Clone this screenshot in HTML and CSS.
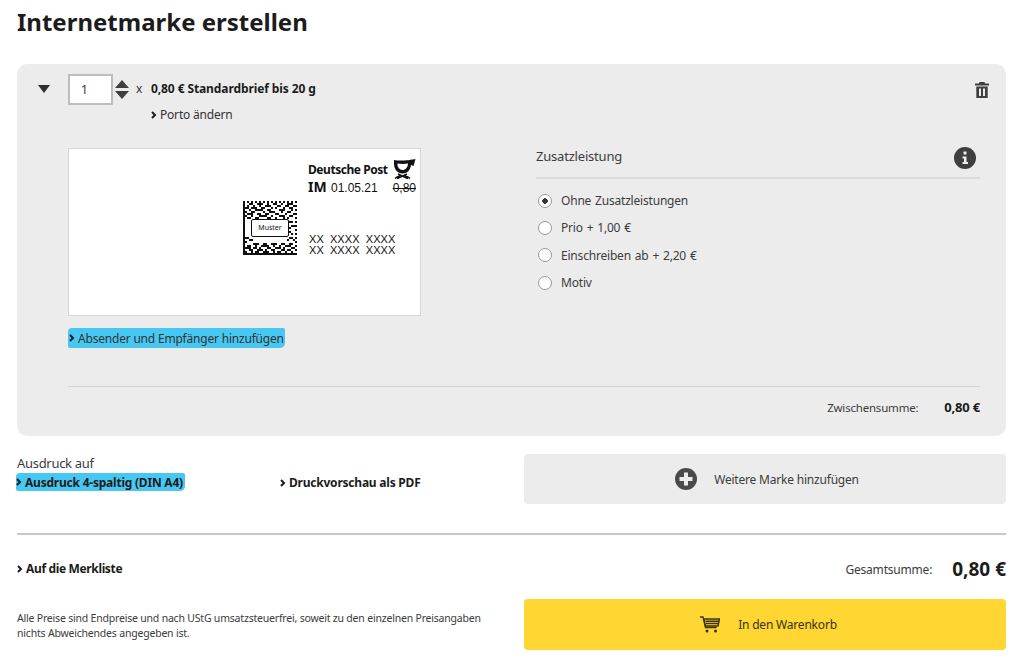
FILE: index.html
```html
<!DOCTYPE html>
<html lang="de">
<head>
<meta charset="utf-8">
<title>Internetmarke erstellen</title>
<link rel="stylesheet" href="styles.css">
</head>
<body>
<main class="page">
  <h1 class="title">Internetmarke erstellen</h1>

  <section class="panel">
    <div class="item-head">
      <svg class="caret" width="12" height="8" viewBox="0 0 12 8"><path d="M0 0h12L6 8z"/></svg>
      <input class="qty" type="text" value="1" aria-label="Anzahl">
      <svg class="spin" width="14" height="19" viewBox="0 0 14 19"><path d="M7 0l7 8H0zM0 11h14l-7 8z"/></svg>
      <span class="times">x</span>
      <div class="product">
        <strong class="product-name">0,80 € Standardbrief bis 20 g</strong>
        <a class="link porto"><svg class="chev" width="6" height="8" viewBox="0 0 6 8"><path d="M1 1l3 3-3 3"/></svg>Porto ändern</a>
      </div>
      <svg class="trash" width="14" height="16" viewBox="0 0 14 16"><path d="M4.500 0h5l.6 1.500H14v2H0v-2h3.900zM1.300 4.500h11.400V16H1.300zM4 6.500V14h2V6.500zM8 6.500V14h2V6.500z" fill-rule="evenodd"/></svg>
    </div>

    <div class="item-body">
      <div class="stamp-col">
        <div class="stamp">
          <div class="stamp-head">
            <div class="stamp-brand">
              <span>Deutsche Post</span>
              <svg class="horn" width="24" height="20" viewBox="0 0 24 20"><path fill-rule="evenodd" fill="#111" d="M2 1C4 1.500 6 1.500 8 1.500C12 1.500 16 1.500 23.500 0L21.500 7L19 6C18.500 11 15 14.500 10.500 14.500C5.500 14.500 2 10 2 5zM5.500 4.500C5 8 7.500 11 10.500 11C13.500 11 15.800 8.500 16 4.500C12 5 9 5 5.500 4.500z"/><path d="M6 15L16 19.700M15 15L5 19.700M3 19.500C4 18.500 5.500 17.500 8 17M18 19.500C17 18.500 15.500 17.500 13 17" fill="none" stroke="#111" stroke-width="1.500"/></svg>
            </div>
            <div class="stamp-line">
              <b class="stamp-im">IM</b>
              <span class="stamp-date">01.05.21</span>
              <span class="stamp-price">0,80</span>
            </div>
          </div>
          <div class="matrix">
            <svg width="54" height="54" viewBox="0 0 27 27" shape-rendering="crispEdges"><path fill="none" stroke="#111" stroke-width="1" d="M.5 0v27M0 26.500h27M2 .5h1M4 .5h1M6 .5h1M8 .5h1M10 .5h1M12 .5h1M14 .5h1M16 .5h1M18 .5h1M20 .5h1M22 .5h1M24 .5h1M26 .5h1M26.500 2v1M26.500 4v1M26.500 6v1M26.500 8v1M26.500 10v1M26.500 12v1M26.500 14v1M26.500 16v1M26.500 18v1M26.500 20v1M26.500 22v1M26.500 24v1M3 1.500h2M7 1.500h3M12 1.500h1M15 1.500h2M19 1.500h1M22 1.500h3M2 2.500h1M5 2.500h1M8 2.500h1M11 2.500h3M17 2.500h2M21 2.500h2M25 2.500h1M1 3.500h2M4 3.500h3M9 3.500h2M14 3.500h1M16 3.500h1M20 3.500h1M23 3.500h2M3 4.500h1M6 4.500h4M12 4.500h2M18 4.500h3M24 4.500h1M1 5.500h1M4 5.500h2M10 5.500h1M13 5.500h3M19 5.500h1M22 5.500h2M2 6.500h3M7 6.500h2M11 6.500h2M16 6.500h2M21 6.500h1M25 6.500h1M1 7.500h1M4 7.500h1M8 7.500h4M14 7.500h1M18 7.500h3M23 7.500h2M2 8.500h2M6 8.500h2M12 8.500h2M16 8.500h1M20 8.500h1M22 8.500h1M1 18.500h2M3 19.500h2M1 20.500h1M5 21.500h3M10 21.500h2M14 21.500h3M19 21.500h2M23 21.500h2M2 22.500h2M6 22.500h1M9 22.500h4M15 22.500h1M18 22.500h1M21 22.500h3M1 23.500h3M5 23.500h2M8 23.500h1M12 23.500h2M16 23.500h3M20 23.500h1M24 23.500h2M3 24.500h2M7 24.500h3M11 24.500h1M14 24.500h2M19 24.500h2M22 24.500h2M1 25.500h1M4 25.500h1M6 25.500h2M10 25.500h3M15 25.500h1M17 25.500h2M21 25.500h1M24 25.500h1M23 10.500h2M22 11.500h1M24 12.500h2M23 13.500h1M22 15.500h2M24 16.500h1M23 18.500h2M22 19.500h1M25 19.500h1"/></svg>
            <span class="muster">Muster</span>
          </div>
          <div class="stamp-code">XX&nbsp; XXXX&nbsp; XXXX<br>XX&nbsp; XXXX&nbsp; XXXX</div>
        </div>
        <a class="link sender"><mark class="marker"><svg class="chev" width="6" height="8" viewBox="0 0 6 8"><path d="M1 1l3 3-3 3"/></svg>Absender und Empfänger hinzufügen</mark></a>
      </div>

      <div class="extras">
        <div class="extras-head">
          <span class="extras-title">Zusatzleistung</span>
          <svg class="info" width="22" height="22" viewBox="0 0 22 22"><circle cx="11" cy="11" r="11" fill="#3f3f3f"/><path d="M9.500 4.500h3v3h-3zM8.500 9.500h4V15h1.500v2H8.500v-2H10v-3.500H8.500z" fill="#ececec"/></svg>
        </div>
        <ul class="options">
          <li class="option"><span class="radio radio-on"></span>Ohne Zusatzleistungen</li>
          <li class="option"><span class="radio"></span>Prio + 1,00 €</li>
          <li class="option"><span class="radio"></span>Einschreiben ab + 2,20 €</li>
          <li class="option"><span class="radio"></span>Motiv</li>
        </ul>
      </div>
    </div>

    <div class="subtotal">
      <span class="subtotal-label">Zwischensumme:</span>
      <strong class="subtotal-value">0,80 €</strong>
    </div>
  </section>

  <section class="print-row">
    <div class="print-col">
      <div class="print-label">Ausdruck auf</div>
      <a class="link bold"><mark class="marker marker-bold"><svg class="chev" width="6" height="8" viewBox="0 0 6 8"><path d="M1 1l3 3-3 3"/></svg>Ausdruck 4-spaltig (DIN A4)</mark></a>
    </div>
    <a class="link bold preview"><svg class="chev" width="6" height="8" viewBox="0 0 6 8"><path d="M1 1l3 3-3 3"/></svg>Druckvorschau als PDF</a>
    <button class="btn btn-grey" type="button">
      <svg width="22" height="22" viewBox="0 0 22 22"><circle cx="11" cy="11" r="11" fill="#4a4a4a"/><path d="M9 4.500h4V9h4.500v4H13v4.500H9V13H4.500V9H9z" fill="#ececec"/></svg>
      <span>Weitere Marke hinzufügen</span>
    </button>
  </section>

  <section class="total-row">
    <a class="link bold merk"><svg class="chev" width="6" height="8" viewBox="0 0 6 8"><path d="M1 1l3 3-3 3"/></svg>Auf die Merkliste</a>
    <div class="total">
      <span class="total-label">Gesamtsumme:</span>
      <strong class="total-value">0,80 €</strong>
    </div>
  </section>

  <section class="checkout-row">
    <p class="legal">Alle Preise sind Endpreise und nach UStG umsatzsteuerfrei, soweit zu den einzelnen Preisangaben nichts Abweichendes angegeben ist.</p>
    <button class="btn btn-yellow" type="button">
      <svg width="20" height="17" viewBox="0 0 20 17"><path d="M0 1h3l2.500 10.500h11" fill="none" stroke="#3a3312" stroke-width="1.300"/><path d="M3.800 3h15.700l-1.500 7H5.500z M5.500 5.200h13M6 7.500h12" fill="none" stroke="#3a3312" stroke-width="1.400"/><circle cx="7" cy="15" r="1.500" fill="#3a3312"/><circle cx="15.500" cy="15" r="1.500" fill="#3a3312"/></svg>
      <span>In den Warenkorb</span>
    </button>
  </section>
</main>
</body>
</html>
```
FILE: styles.css
```css
* { box-sizing: border-box; }
html, body { margin: 0; padding: 0; background: #fff; }
body {
  font-family: "Noto Sans", "Liberation Sans", sans-serif;
  font-size: 12px;
  letter-spacing: -.2px;
  color: #3c3c3c;
  width: 1024px;
  height: 664px;
  overflow: hidden;
}
.page { padding: 0 18px 0 17px; }
.title {
  margin: 0;
  height: 64px;
  padding-top: 5px;
  font-size: 24px;
  line-height: 34px;
  font-weight: 700;
  letter-spacing: 0;
  color: #1c1c1c;
}
.panel {
  height: 372px;
  background: #ececec;
  border-radius: 10px;
  padding: 10px 26px 0 21px;
}
.item-head { display: flex; align-items: flex-start; }
.caret { margin-top: 11px; margin-right: 18px; fill: #2f2f2f; flex: none; }
.qty {
  width: 45px;
  height: 31px;
  border: 2px solid #bdbdbd;
  background: #fff;
  padding: 0 0 0 11px;
  font: 12px "Noto Sans", sans-serif;
  color: #333;
  flex: none;
}
.spin { margin: 6px 0 0 2px; fill: #3f3f3f; flex: none; }
.times { margin: 6px 0 0 7px; width: 15px; color: #333; }
.product { flex: 1; display: flex; flex-direction: column; }
.product-name { margin-top: 6px; line-height: 17px; color: #1c1c1c; letter-spacing: -.1px; }
.porto { margin-top: 9px; line-height: 17px; }
.trash { margin: 8px -9px 0 0; fill: #3f3f3f; flex: none; }
.link { color: #333; text-decoration: none; display: block; white-space: nowrap; }
.bold { font-weight: 700; color: #1c1c1c; letter-spacing: -.22px; }
.merk { letter-spacing: -.35px; }
.chev { fill: none; stroke: #1c1c1c; stroke-width: 2; margin-right: 3px; vertical-align: 0; }
.item-body {
  display: flex;
  margin: 25px 0 0 30px;
  height: 239px;
  border-bottom: 1px solid #d4d4d4;
}
.stamp-col { width: 468px; flex: none; }
.stamp {
  width: 353px;
  height: 168px;
  background: #fff;
  border: 1px solid #d6d6d6;
  display: grid;
  grid-template-columns: 174px 65px 1fr;
  grid-template-rows: 52px 1fr;
  color: #111;
}
.stamp-head { grid-column: 3; grid-row: 1; padding-top: 9px; width: 108px; }
.stamp-brand { display: flex; justify-content: space-between; align-items: flex-end; height: 21px; font-size: 12px; font-weight: 700; letter-spacing: -.45px; }
.stamp-brand span { line-height: 18px; }
.stamp-line { display: flex; align-items: baseline; font-size: 12px; line-height: 15px; letter-spacing: 0; }
.stamp-im { font-size: 14px; width: 23px; }
.stamp-date { flex: 1; font-family: "Liberation Sans", sans-serif; }
.stamp-price { font-family: "Liberation Sans", sans-serif; text-decoration: line-through; }
.matrix { grid-column: 2; grid-row: 2; position: relative; width: 54px; height: 54px; }
.matrix svg { display: block; }
.muster {
  position: absolute;
  left: 8px;
  top: 18px;
  width: 38px;
  height: 18px;
  background: #fff;
  border: 1px solid #111;
  border-radius: 2px;
  font-size: 7px;
  letter-spacing: 0;
  line-height: 16px;
  text-align: center;
}
.stamp-code {
  grid-column: 3;
  grid-row: 2;
  padding: 33px 0 0 1px;
  font-size: 11px;
  line-height: 11px;
  font-family: "Liberation Sans", sans-serif;
  letter-spacing: .05px;
  white-space: nowrap;
}
.sender { margin-top: 13px; }
.marker { background: #46c8f2; color: inherit; border-radius: 4px 2px 5px 2px; padding: 1.500px 1px; }
.marker-bold { padding: .5px 2px 1px 0; margin-left: -1px; }
.extras { width: 444px; flex: none; margin-top: -1px; }
.extras-head {
  display: flex;
  justify-content: space-between;
  align-items: flex-start;
  height: 32px;
  border-bottom: 2px solid #d9d9d9;
}
.extras-title { font-size: 13px; line-height: 18px; }
.info { margin-right: 4px; }
.options { list-style: none; margin: 8px 0 0; padding: 0; }
.option { display: flex; align-items: center; height: 27.300px; padding-left: 2px; word-spacing: 1px; }
.radio {
  width: 14px;
  height: 14px;
  border: 1px solid #999;
  border-radius: 50%;
  background: #fff;
  margin-right: 9px;
  flex: none;
}
.radio-on { background: radial-gradient(circle, #333 0 2.500px, #fff 3px); }
.subtotal {
  display: flex;
  justify-content: flex-end;
  align-items: center;
  height: 40px;
}
.subtotal-label { font-size: 11.500px; }
.subtotal-value { margin-left: 26px; font-size: 13px; color: #1c1c1c; }
.print-row { display: flex; margin-top: 18px; height: 50px; }
.print-col { width: 263px; flex: none; }
.print-label { font-size: 13px; letter-spacing: -.3px; line-height: 17px; margin-top: 1px; }
.print-col .link { margin-top: 1px; }
.preview { width: 244px; flex: none; margin-top: 20px; }
.btn {
  width: 482px;
  height: 50px;
  border: 0;
  border-radius: 4px;
  display: flex;
  justify-content: center;
  align-items: center;
  font: 12px "Noto Sans", sans-serif;
  letter-spacing: -.2px;
  color: #3c3c3c;
  flex: none;
}
.btn-grey { background: #ececec; gap: 17px; padding-left: 10px; }
.btn-yellow { background: #ffd632; height: 51px; color: #3a3312; gap: 18px; padding-left: 13px; }
.total-row {
  display: flex;
  justify-content: space-between;
  align-items: center;
  margin-top: 29px;
  height: 66px;
  padding-top: 3px;
  border-top: 2px solid #c8c8c8;
}
.total { display: flex; align-items: center; }
.total-label { margin-top: 2px; }
.total-value { margin-left: 20px; font-size: 19px; color: #1c1c1c; letter-spacing: 0; }
.checkout-row { display: flex; justify-content: space-between; align-items: center; height: 51px; }
.legal { margin: 2px 0 0; width: 490px; font-size: 10.500px; letter-spacing: -.2px; line-height: 15px; }
```
